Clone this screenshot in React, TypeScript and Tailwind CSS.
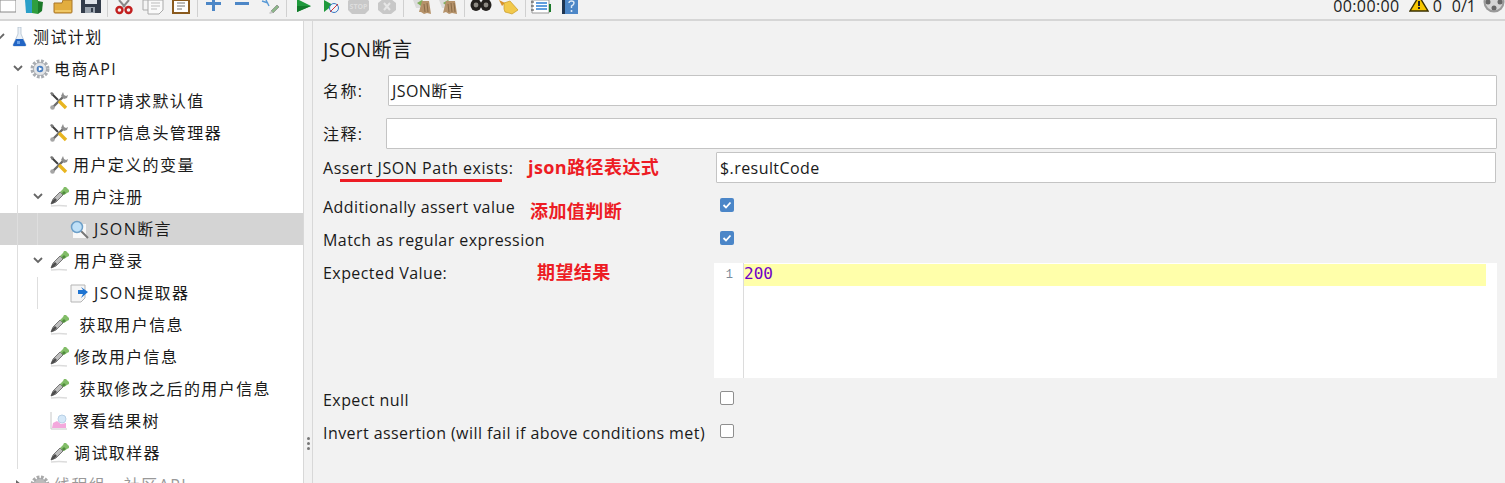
import type { ReactNode } from "react";

// toolbar icons, all cut off by the top of the window like the screenshot
const ToolIcon = ({ w, ml, children }: { w: number; ml: string; children: ReactNode }) => (
  <svg width={w} height="20" viewBox={`0 0 ${w} 20`} className={`shrink-0 ${ml}`}>
    {children}
  </svg>
);

const Sep = ({ ml }: { ml: string }) => <div className={`w-px h-[17px] self-start bg-[#d0d0d0] ${ml}`} />;

const Toolbar = () => (
  <div className="flex items-start h-[21px] shrink-0 border-b-2 border-[#d6d6d6] bg-[#f2f2f2] overflow-hidden">
    <ToolIcon w={16} ml="ml-0">
      <path d="M0 0h16v12H0z" fill="#fff" stroke="#888" />
    </ToolIcon>
    <ToolIcon w={20} ml="ml-[8px]">
      <path d="M1 0h7l1 13-7 0z" fill="#2a9fc9" />
      <path d="M8 0h6l0 14-6-1z" fill="#2f9e3f" />
      <path d="M14 1l5 1-1 9-4 3z" fill="#1c7a2a" />
    </ToolIcon>
    <ToolIcon w={20} ml="ml-[9px]">
      <path d="M1 3h8l1-3h9v12q0 1-1 1H2q-1 0-1-1z" fill="#e2ad3f" stroke="#a9772a" />
      <path d="M2 10h16v2H2z" fill="#f0c867" />
    </ToolIcon>
    <ToolIcon w={20} ml="ml-[8px]">
      <path d="M0 0h20v13H0z" fill="#333c4a" />
      <path d="M4 0h12v4H4z" fill="#dfe3e8" />
      <path d="M4 7h10v6H4z" fill="#9aa3ad" />
      <path d="M10 8h2v4h-2z" fill="#333c4a" />
    </ToolIcon>
    <Sep ml="ml-[6px]" />
    <ToolIcon w={18} ml="ml-[7px]">
      <path d="M4 0l6 7M14 0L8 7" stroke="#8a8a8a" strokeWidth="2" />
      <circle cx="4.5" cy="10" r="3" fill="none" stroke="#c21f1f" strokeWidth="2.4" />
      <circle cx="13.5" cy="10" r="3" fill="none" stroke="#c21f1f" strokeWidth="2.4" />
    </ToolIcon>
    <ToolIcon w={22} ml="ml-[9px]">
      <path d="M1 0h13v10H1z" fill="#f4f4f4" stroke="#aaa" />
      <path d="M6 0h15v10l-4 4H6z" fill="#fafafa" stroke="#aaa" />
      <path d="M9 3h9M9 6h9M9 9h6" stroke="#bbb" />
    </ToolIcon>
    <ToolIcon w={18} ml="ml-[8px]">
      <path d="M1 0h16v13H1z" fill="#fff" stroke="#8a5a1e" strokeWidth="2" />
      <path d="M5 3h8M5 6h8M5 9h5" stroke="#777" />
    </ToolIcon>
    <Sep ml="ml-[7px]" />
    <ToolIcon w={15} ml="ml-[8px]">
      <path d="M0 2h15v3H0zM6 0h3v11H6z" fill="#4d87c7" />
    </ToolIcon>
    <ToolIcon w={14} ml="ml-[14px]">
      <path d="M0 2h14v3H0z" fill="#4d87c7" />
    </ToolIcon>
    <ToolIcon w={20} ml="ml-[12px]">
      <path d="M1 1l6 2M5 0l3 6" stroke="#5a9ad6" strokeWidth="1.4" />
      <path d="M10 11l6-6 2 2-6 6z" fill="#8db88a" stroke="#777" strokeWidth=".6" />
      <path d="M8 13l2-2 2 2-3 1z" fill="#ccc" />
    </ToolIcon>
    <Sep ml="ml-[5px]" />
    <ToolIcon w={14} ml="ml-[10px]">
      <path d="M0 0h2l12 6L0 12z" fill="#1f9a3c" />
      <path d="M0 6h14L0 12z" fill="#127a2a" />
    </ToolIcon>
    <ToolIcon w={15} ml="ml-[13px]">
      <path d="M0 0l9 5-9 7z" fill="#1f9a3c" />
      <circle cx="10" cy="8" r="4.5" fill="#eef4fb" stroke="#3b78c2" />
      <path d="M6 12l8-8" stroke="#d33" />
    </ToolIcon>
    <ToolIcon w={21} ml="ml-[9px]">
      <path d="M4 -3h13l4 4v9l-4 4H4l-4-4V1z" fill="#c8c8c8" />
      <text x="10.500" y="9" textAnchor="middle" fontSize="7" fontWeight="700" fill="#dddddd">STOP</text>
    </ToolIcon>
    <ToolIcon w={18} ml="ml-[9px]">
      <path d="M5 -1h8l5 4v7l-5 4H5l-5-4V3z" fill="#c8c8c8" />
      <path d="M6 3l6 7M12 3l-6 7" stroke="#e6e6e6" strokeWidth="2" />
    </ToolIcon>
    <Sep ml="ml-[7px]" />
    <ToolIcon w={18} ml="ml-[9px]">
      <path d="M0 0h9l1 8H3z" fill="#dcdcdc" />
      <path d="M4 3l5-3 2 2-3 4z" fill="#7fb05b" />
      <path d="M9 1h7l2 13-4-1-3 1-3-2-2 0z" fill="#b5926a" />
      <path d="M11 4l1 8M14 3l1 9" stroke="#8a6c48" />
    </ToolIcon>
    <ToolIcon w={18} ml="ml-[8px]">
      <path d="M0 0h9l1 8H3z" fill="#dcdcdc" />
      <path d="M4 3l5-3 2 2-3 4z" fill="#7fb05b" />
      <path d="M7 1h9l2 13-5-1-3 1-3-2-3 1z" fill="#b5926a" />
      <path d="M9 4l1 8M12 3l1 9M15 3l1 9" stroke="#8a6c48" />
    </ToolIcon>
    <Sep ml="ml-[7px]" />
    <ToolIcon w={22} ml="ml-[5px]">
      <ellipse cx="6" cy="5" rx="5.5" ry="6" fill="#24211e" />
      <ellipse cx="16" cy="5" rx="5.5" ry="6" fill="#24211e" />
      <circle cx="6" cy="5" r="2.4" fill="#8d8a83" />
      <circle cx="16" cy="5" r="2.4" fill="#8d8a83" />
    </ToolIcon>
    <ToolIcon w={20} ml="ml-[7px]">
      <path d="M0 0l6 3-3 3z" fill="#d8902a" />
      <path d="M5 3l6-2 8 9-6 4-3-1-4-1-1-3z" fill="#f2c94c" stroke="#c99a23" strokeWidth=".7" />
    </ToolIcon>
    <Sep ml="ml-[6px]" />
    <ToolIcon w={20} ml="ml-[5px]">
      <path d="M1 0h17v13H1z" fill="#fff" stroke="#999" />
      <path d="M5 3h11M5 6h11M5 9h11" stroke="#2f7fd3" strokeWidth="1.3" />
      <path d="M0 2h3M0 6h3M0 10h3" stroke="#444" />
      <path d="M18 4h2v8h-2z" fill="#1c7a2a" />
    </ToolIcon>
    <ToolIcon w={16} ml="ml-[11px]">
      <path d="M0 0h16v14H0z" fill="#4d87c7" />
      <path d="M0 0h3v14H0z" fill="#1f3550" />
      <path d="M7 3q0-2 2.500-2t2.500 2q0 2-2.500 3v2" fill="none" stroke="#dbe8f6" strokeWidth="1.4" />
      <path d="M8.700 10h1.600v2H8.700z" fill="#dbe8f6" />
    </ToolIcon>
    <div className="flex items-start ml-auto -mt-[5px] gap-[10px] text-[16px] leading-[22px] text-[#222]">
      <span className="tracking-[0.4px]">00:00:00</span>
      <svg width="20" height="17" viewBox="0 0 20 17" className="-ml-[1px] shrink-0">
        <path d="M10 1l9 15H1z" fill="#f6c600" stroke="#3a3000" strokeWidth="1.4" />
        <path d="M9 6h2v5H9zM9 12h2v2H9z" fill="#222" />
      </svg>
      <span className="-ml-[6px]">0</span>
      <span>0/1</span>
      <svg width="22" height="22" viewBox="0 0 22 22" className="-ml-[3px] -mt-[4px] shrink-0">
        <circle cx="11" cy="11" r="10.500" fill="#9a9a9a" />
        <circle cx="11" cy="11" r="8.500" fill="#d4d4d4" />
        <circle cx="11" cy="5" r="2.500" fill="#666" />
        <circle cx="5" cy="11" r="2.500" fill="#666" />
        <circle cx="17" cy="11" r="2.500" fill="#666" />
        <circle cx="11" cy="17" r="2.500" fill="#666" />
      </svg>
    </div>
  </div>
);

const Chevron = ({ right }: { right?: boolean }) => (
  <svg width="12" height="12" viewBox="0 0 12 12" className="shrink-0">
    {right ? (
      <path d="M4 2l5 4-5 4z" fill="#666" />
    ) : (
      <path d="M2 4l4 4 4-4" fill="none" stroke="#666" strokeWidth="1.8" />
    )}
  </svg>
);

const Flask = () => (
  <svg width="15" height="20" viewBox="0 0 15 20" className="shrink-0">
    <path d="M6 0h3v7l5 11q0 1-1 1H2q-1 0-1-1l5-11z" fill="#eaf0f6" stroke="#aab9c9" strokeWidth=".7" />
    <path d="M4 12h7l3 6q0 1-1 1H2q-1 0-1-1z" fill="#2265c4" />
    <path d="M5 14h3v3H5z" fill="#6aa0e6" />
  </svg>
);

const Gear = ({ gray }: { gray?: boolean }) => (
  <svg width="20" height="20" viewBox="0 0 20 20" className="shrink-0">
    <circle cx="10" cy="10" r="7.500" fill="none" stroke={gray ? "#aaa" : "#a9adb2"} strokeWidth="4" strokeDasharray="2.600 1.400" />
    <circle cx="10" cy="10" r="6.500" fill={gray ? "#bbb" : "#e4e6e8"} stroke="#9a9ea3" strokeWidth=".7" />
    {!gray && <circle cx="10" cy="10" r="3.300" fill="#4a7fc0" />}
    {!gray && <path d="M8.800 8l3.500 2-3.500 2z" fill="#fff" />}
  </svg>
);

const Tools = () => (
  <svg width="18" height="18" viewBox="0 0 18 18" className="shrink-0">
    <path d="M3 15L14 4" stroke="#6b6b6b" strokeWidth="2.400" />
    <path d="M13 0l1 3 2 1 2-1-1 3-3 1-3-3z" fill="#8e8e8e" />
    <path d="M2 2l6 6" stroke="#3f3f3f" strokeWidth="2" />
    <path d="M9 9l7 7" stroke="#e8b51f" strokeWidth="3.400" />
    <path d="M0 1l2-1 2 2-2 2z" fill="#777" />
    <circle cx="2.500" cy="15.500" r="2.300" fill="#a5a5a5" />
  </svg>
);

const Dropper = () => (
  <svg width="19" height="20" viewBox="0 0 19 20" className="shrink-0">
    <path d="M1 19q8-1 16 0" stroke="#dcdcdc" strokeWidth="1.400" fill="none" />
    <path d="M1 17l2-5 7-7 3 3-7 7z" fill="#bdbdbd" stroke="#5c5c5c" strokeWidth=".8" />
    <path d="M1 17l1-3 3-3 2 2-3 3z" fill="#4d4d4d" />
    <path d="M10 5l3-3 1-2h2l3 3v2l-2 1-3 2z" fill="#82bd68" />
    <path d="M13 8l3-2-2-2-2 2z" fill="#4f8a3d" />
  </svg>
);

const Magnifier = () => (
  <svg width="19" height="19" viewBox="0 0 19 19" className="shrink-0">
    <path d="M3 4h13v14H3z" fill="#f8f8f8" />
    <path d="M11 11l7 7" stroke="#777" strokeWidth="2" />
    <circle cx="7" cy="7" r="5.500" fill="#bfe0f8" stroke="#6d9fc8" strokeWidth="1.500" />
  </svg>
);

const Extractor = () => (
  <svg width="19" height="19" viewBox="0 0 19 19" className="shrink-0">
    <path d="M1 1h14v13l-4 4H1z" fill="#f5f5f5" stroke="#b5b5b5" />
    <path d="M11 3l7 5-7 6 2-4H8V6h5z" fill="#1f74d1" />
  </svg>
);

const ResultTree = () => (
  <svg width="18" height="18" viewBox="0 0 18 18" className="shrink-0">
    <path d="M1 0v17h16" fill="none" stroke="#c8c8c8" />
    <path d="M2 16l1-5 4-2 4 3 5-1v5z" fill="#f3a8dc" />
    <circle cx="12" cy="7" r="4" fill="#d5e8f8" stroke="#b8d0e6" />
  </svg>
);

type RowProps = {
  level: 0 | 1 | 2 | 3;
  open?: boolean;
  icon: ReactNode;
  label: string;
  selected?: boolean;
  gray?: boolean;
};

const Row = ({ level, open, icon, label, selected, gray }: RowProps) => (
  <div className={`flex items-center h-8 shrink-0 whitespace-pre ${selected ? "bg-[#d4d4d4]" : ""}`}>
    {level >= 2 && <div className="w-[18px] h-full shrink-0 border-r border-[#dedede]" />}
    {level === 3 && <div className="w-[20px] h-full shrink-0 border-r border-[#dedede]" />}
    {level === 0 && <div className="-ml-[6px] -mt-[3px] mr-[6px]"><Chevron /></div>}
    {level === 1 && <div className="ml-[12px] mr-[6px] -mt-[3px]"><Chevron right={gray} /></div>}
    {level === 2 && (
      <div className="ml-[14px] mr-[6px] -mt-[3px] w-[12px]">{open && <Chevron />}</div>
    )}
    {level === 3 && <div className="ml-[32px]" />}
    {icon}
    <span className={`tracking-[1.4px] ${level === 1 ? "ml-[4px]" : level === 0 ? "ml-[6px]" : "ml-[5px]"} ${gray ? "text-[#999]" : "text-[#1a1a1a]"}`}>
      {label}
    </span>
  </div>
);

const Tree = () => (
  <div className="flex flex-col w-[303px] shrink-0 bg-white overflow-hidden">
    <Row level={0} icon={<Flask />} label="测试计划" />
    <Row level={1} icon={<Gear />} label="电商API" />
    <Row level={2} icon={<Tools />} label="HTTP请求默认值" />
    <Row level={2} icon={<Tools />} label="HTTP信息头管理器" />
    <Row level={2} icon={<Tools />} label="用户定义的变量" />
    <Row level={2} open icon={<Dropper />} label="用户注册" />
    <Row level={3} selected icon={<Magnifier />} label="JSON断言" />
    <Row level={2} open icon={<Dropper />} label="用户登录" />
    <Row level={3} icon={<Extractor />} label="JSON提取器" />
    <Row level={2} icon={<Dropper />} label=" 获取用户信息" />
    <Row level={2} icon={<Dropper />} label="修改用户信息" />
    <Row level={2} icon={<Dropper />} label=" 获取修改之后的用户信息" />
    <Row level={2} icon={<ResultTree />} label="察看结果树" />
    <Row level={2} icon={<Dropper />} label="调试取样器" />
    <Row level={1} gray icon={<Gear gray />} label="线程组 - 社区API" />
  </div>
);

const Check = ({ checked }: { checked?: boolean }) =>
  checked ? (
    <div className="flex items-center justify-center w-[14px] h-[14px] rounded-[2px] bg-[#4b86c8]">
      <svg width="10" height="10" viewBox="0 0 10 10">
        <path d="M1.500 5l2.500 2.500 4.500-5" fill="none" stroke="#fff" strokeWidth="1.800" />
      </svg>
    </div>
  ) : (
    <div className="w-[14px] h-[14px] rounded-[2px] border border-[#8f8f8f] bg-white" />
  );

const CheckRow = ({ label, checked }: { label: string; checked?: boolean }) => (
  <div className="flex items-center h-[33px] shrink-0">
    <span className="w-[397px] shrink-0 mt-[2px]">{label}</span>
    <div className="-mt-[2px]"><Check checked={checked} /></div>
  </div>
);

const Field = ({ value }: { value: string }) => (
  <div className="flex items-center flex-1 h-[31px] px-[3px] bg-white border border-[#c4c4c4] rounded-[1px]">{value}</div>
);

const Note = ({ className, children }: { className: string; children: ReactNode }) => (
  <span className={`absolute font-bold text-[#ed1c24] text-[18px] leading-[24px] whitespace-nowrap ${className}`}>
    {children}
  </span>
);

const Form = () => (
  <div className="relative flex flex-col flex-1 pl-[10px] pr-[8px] bg-[#f2f2f2] text-[#1a1a1a] tracking-[0.43px]">
    <div className="flex items-center h-[54px] shrink-0 pt-[3px] text-[20px] tracking-[0.4px]">JSON断言</div>
    <div className="flex items-center">
      <span className="w-[65px] shrink-0 tracking-[1.4px]">名称:</span>
      <Field value="JSON断言" />
    </div>
    <div className="flex items-center mt-[12px]">
      <span className="w-[63px] shrink-0 tracking-[1.4px]">注释:</span>
      <Field value="" />
    </div>
    <div className="flex items-center mt-[3px]">
      <span className="w-[393px] shrink-0 tracking-[0.55px]">Assert JSON Path exists:</span>
      <div className="flex flex-1 mr-[1px]"><Field value="$.resultCode" /></div>
    </div>
    <div className="h-[6px] shrink-0" />
    <CheckRow label="Additionally assert value" checked />
    <CheckRow label="Match as regular expression" checked />
    <div className="flex mt-[8px] h-[115px] shrink-0">
      <span className="w-[391px] shrink-0 leading-[20px]">Expected Value:</span>
      <div className="flex flex-1 bg-white">
        <div className="w-[30px] shrink-0 border-r border-[#dcdcdc] pt-[1px] pr-[10px] text-right font-['Liberation_Mono',monospace] text-[12px] leading-[22px] text-[#7a8a99] tracking-normal">1</div>
        <div className="flex-1 mr-[11px] pt-[1px]">
          <div className="h-[22px] bg-[#ffffaa] font-['DejaVu_Sans_Mono',monospace] text-[16px] leading-[19px] text-[#6f00c8] tracking-normal">200</div>
        </div>
      </div>
    </div>
    <div className="h-[4px] shrink-0" />
    <CheckRow label="Expect null" />
    <CheckRow label="Invert assertion (will fail if above conditions met)" />
    <div className="absolute left-[27px] top-[158px] w-[162px] h-[3px] bg-[#ed1c24]" />
    <Note className="left-[215px] top-[134px]">json路径表达式</Note>
    <Note className="left-[217px] top-[178px]">添加值判断</Note>
    <Note className="left-[224px] top-[239px]">期望结果</Note>
  </div>
);

const App = () => (
  <div className="flex flex-col w-[1505px] h-[483px] overflow-hidden bg-[#f2f2f2] text-[16px] font-['Open_Sans','Noto_Sans_CJK_SC',sans-serif]">
    <Toolbar />
    <div className="flex flex-1 min-h-0">
      <Tree />
      <div className="flex flex-col items-center justify-end gap-[2px] w-[10px] shrink-0 pb-[33px] border-x border-[#d8d8d8]">
        <div className="w-[3px] h-[3px] rounded-full bg-[#777]" />
        <div className="w-[3px] h-[3px] rounded-full bg-[#777]" />
        <div className="w-[3px] h-[3px] rounded-full bg-[#777]" />
      </div>
      <Form />
    </div>
  </div>
);

export default App;
